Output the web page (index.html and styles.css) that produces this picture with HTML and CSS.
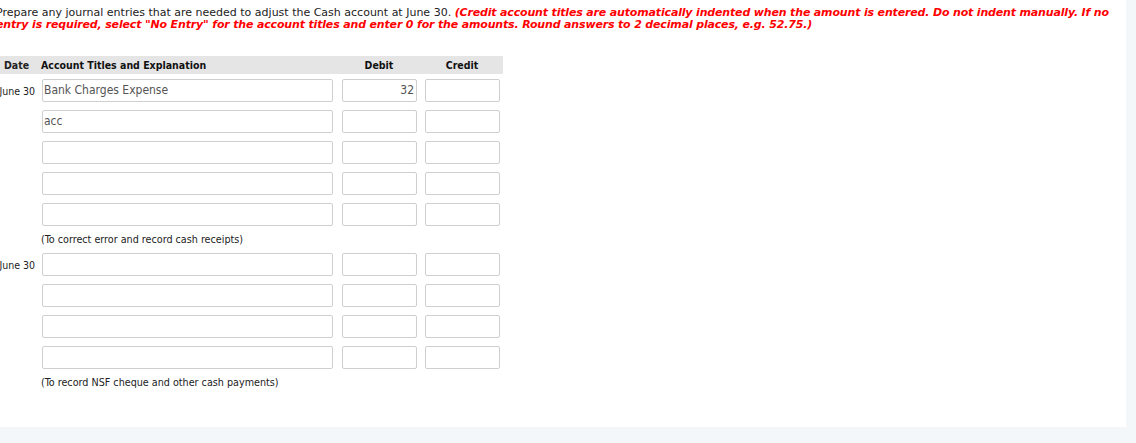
FILE: index.html
```html
<!DOCTYPE html>
<html>
<head>
<meta charset="utf-8">
<link rel="stylesheet" href="styles.css">
</head>
<body>
<div class="panel">
  <div class="content">
    <p class="instructions">Prepare any journal entries that are needed to adjust the Cash account at June 30. <em class="warn">(Credit account titles are automatically indented when the amount is entered. Do not indent manually. If no entry is required, select "No Entry" for the account titles and enter 0 for the amounts. Round answers to 2 decimal places, e.g. 52.75.)</em></p>

    <div class="journal">
      <div class="row head">
        <div class="c-date">Date</div>
        <div class="c-acct">Account Titles and Explanation</div>
        <div class="c-debit">Debit</div>
        <div class="c-credit">Credit</div>
      </div>

      <div class="row">
        <div class="c-date">June 30</div>
        <div class="c-acct"><div class="field acct">Bank Charges Expense</div></div>
        <div class="c-debit"><div class="field num">32</div></div>
        <div class="c-credit"><div class="field num"></div></div>
      </div>
      <div class="row">
        <div class="c-date"></div>
        <div class="c-acct"><div class="field acct">acc</div></div>
        <div class="c-debit"><div class="field num"></div></div>
        <div class="c-credit"><div class="field num"></div></div>
      </div>
      <div class="row">
        <div class="c-date"></div>
        <div class="c-acct"><div class="field acct"></div></div>
        <div class="c-debit"><div class="field num"></div></div>
        <div class="c-credit"><div class="field num"></div></div>
      </div>
      <div class="row">
        <div class="c-date"></div>
        <div class="c-acct"><div class="field acct"></div></div>
        <div class="c-debit"><div class="field num"></div></div>
        <div class="c-credit"><div class="field num"></div></div>
      </div>
      <div class="row">
        <div class="c-date"></div>
        <div class="c-acct"><div class="field acct"></div></div>
        <div class="c-debit"><div class="field num"></div></div>
        <div class="c-credit"><div class="field num"></div></div>
      </div>
      <div class="note">(To correct error and record cash receipts)</div>

      <div class="row">
        <div class="c-date">June 30</div>
        <div class="c-acct"><div class="field acct"></div></div>
        <div class="c-debit"><div class="field num"></div></div>
        <div class="c-credit"><div class="field num"></div></div>
      </div>
      <div class="row">
        <div class="c-date"></div>
        <div class="c-acct"><div class="field acct"></div></div>
        <div class="c-debit"><div class="field num"></div></div>
        <div class="c-credit"><div class="field num"></div></div>
      </div>
      <div class="row">
        <div class="c-date"></div>
        <div class="c-acct"><div class="field acct"></div></div>
        <div class="c-debit"><div class="field num"></div></div>
        <div class="c-credit"><div class="field num"></div></div>
      </div>
      <div class="row">
        <div class="c-date"></div>
        <div class="c-acct"><div class="field acct"></div></div>
        <div class="c-debit"><div class="field num"></div></div>
        <div class="c-credit"><div class="field num"></div></div>
      </div>
      <div class="note">(To record NSF cheque and other cash payments)</div>
    </div>
  </div>
</div>
</body>
</html>
```

FILE: styles.css
```css
html, body {
  margin: 0;
  padding: 0;
  background: #f4f7fa;
  height: 100%;
}

body {
  font-family: "DejaVu Sans Condensed", "DejaVu Sans", sans-serif;
  color: #222;
}

.panel {
  width: 1126px;
  height: 427px;
  background: #fff;
  overflow: hidden;
}

.content {
  margin-left: -4px;
}

.instructions {
  margin: 0;
  padding-top: 7px;
  font-family: "DejaVu Sans", sans-serif;
  font-size: 11px;
  line-height: 12px;
  color: #222;
  width: 1120px;
}

.warn {
  color: #f00;
  font-weight: bold;
  font-style: italic;
  letter-spacing: -0.16px;
}

.journal {
  margin-top: 25px;
  width: 507px;
}

.row {
  display: grid;
  grid-template-columns: 44px 297px 84px 82px;
  align-items: center;
  height: 31px;
  font-size: 10.5px;
}

.row.head {
  height: 18px;
  background: #e5e5e5;
  font-weight: bold;
  color: #111;
  margin-bottom: 1px;
}

.head .c-date {
  text-align: left;
  padding-left: 8px;
}

.head .c-acct {
  padding-left: 1px;
}

.head .c-debit,
.head .c-credit {
  text-align: center;
}

.c-date {
  text-align: right;
  padding-right: 5px;
  color: #222;
}

.field {
  box-sizing: border-box;
  height: 23px;
  border: 1px solid #cfcfcf;
  border-radius: 2px;
  background: #fff;
  color: #555;
  font-size: 12px;
  line-height: 21px;
  padding: 0 2px 0 1px;
  white-space: nowrap;
  overflow: hidden;
}

.field.acct {
  width: 291px;
  margin-left: 2px;
}

.c-debit .field {
  width: 75px;
  margin-left: 5px;
}

.c-credit .field {
  width: 75px;
  margin-left: 4px;
}

.field.num {
  text-align: right;
}

.note {
  height: 19px;
  line-height: 19px;
  padding-left: 45px;
  font-size: 10.7px;
  color: #222;
}
```
